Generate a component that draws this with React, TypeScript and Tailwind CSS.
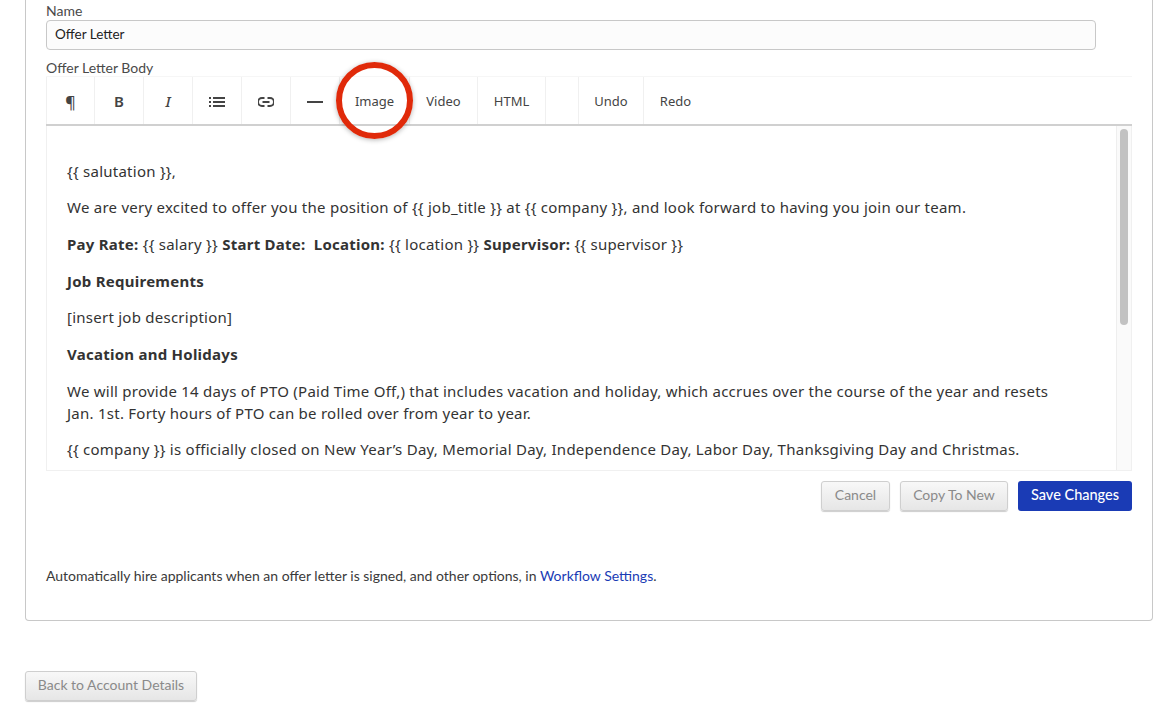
const UI_FONT = "font-['Lato','Open_Sans',sans-serif]";

function GrayButton({ label, className }: { label: string; className: string }) {
  return (
    <button
      className={`flex h-[30px] items-center justify-center rounded-[3px] border border-[#cfcfcf] bg-gradient-to-b from-[#f8f8f8] to-[#e6e6e6] pb-[3px] text-[14px] text-[#8a8a8a] shadow-[0_1px_1px_rgba(0,0,0,0.2)] ${className}`}
    >
      {label}
    </button>
  );
}

function ToolButton({ children, className }: { children: React.ReactNode; className: string }) {
  return (
    <div className={`flex h-full items-center justify-center border-r border-[#f0f0f0] pt-[2px] ${className}`}>
      {children}
    </div>
  );
}

export default function App() {
  return (
    <div className={`h-[721px] w-[1169px] overflow-hidden bg-white ${UI_FONT}`}>
      <div className="px-[16px] pl-[25px]">
        <div className="h-[621px] rounded-b-[4px] border-x border-b border-[#c8c8c8] pl-[20px] pr-[20px]">
          <label className="block pt-[3px] text-[14px] leading-[16px] text-[#4a4a4a]">Name</label>
          <input
            readOnly
            value="Offer Letter"
            className="mt-[1px] block h-[30px] w-[1050px] rounded-[4px] border border-[#c8c8c8] bg-[#fcfcfc] px-[8px] pb-[2px] text-[13.5px] text-[#222]"
          />
          <label className="mt-[10px] block text-[14px] leading-[16px] text-[#4a4a4a]">Offer Letter Body</label>

          <div className="relative mt-px w-[1086px]">
            {/* toolbar */}
            <div className="flex h-[49px] items-center border-b-2 border-[#d0d0d0] font-['Noto_Sans',sans-serif] text-[13px] text-[#444] shadow-[0_-1px_0_#f6f6f6]">
              <ToolButton className="w-[49px] border-l text-[16px] font-medium">¶</ToolButton>
              <ToolButton className="w-[49px] text-[15px] font-semibold">B</ToolButton>
              <ToolButton className="w-[49px] text-[15px] font-medium italic">I</ToolButton>
              <ToolButton className="w-[49px]">
                <svg width="16" height="12" viewBox="0 0 16 12" fill="#444">
                  <rect x="0" y="1" width="2" height="2" />
                  <rect x="0" y="5" width="2" height="2" />
                  <rect x="0" y="9" width="2" height="2" />
                  <rect x="4" y="1" width="12" height="2" />
                  <rect x="4" y="5" width="12" height="2" />
                  <rect x="4" y="9" width="12" height="2" />
                </svg>
              </ToolButton>
              <ToolButton className="w-[49px]">
                <svg width="16" height="10" viewBox="0 0 16 10" fill="none" stroke="#444" strokeWidth="2">
                  <path d="M6.5 1H4a4 4 0 0 0 0 8h2.5" />
                  <path d="M9.5 1H12a4 4 0 0 1 0 8H9.5" />
                  <path d="M4.5 5h7" />
                </svg>
              </ToolButton>
              <ToolButton className="w-[49px]">
                <span className="block h-[2px] w-[16px] bg-[#444]" />
              </ToolButton>
              <ToolButton className="w-[70px]">Image</ToolButton>
              <ToolButton className="w-[68px]">Video</ToolButton>
              <ToolButton className="w-[68px]">HTML</ToolButton>
              <ToolButton className="w-[33px]">{""}</ToolButton>
              <ToolButton className="w-[65px]">Undo</ToolButton>
              <div className="flex h-full w-[63px] items-center justify-center pt-[2px]">Redo</div>
            </div>

            {/* highlight ring around the Image button */}
            <div className="absolute left-[290px] top-[-15px] h-[77px] w-[77px] rounded-full border-[6px] border-[#e02a0a] shadow-[0_1px_5px_rgba(0,0,0,0.3)]" />

            {/* editor body */}
            <div className="flex h-[345px] overflow-hidden border-x border-b border-[#f0f0f0]">
              <div className="w-[1069px] shrink-0 pl-[20px] pr-[46px] pt-[33.5px] font-['Noto_Sans',sans-serif] text-[15px] leading-[22px] tracking-[0.25px] text-[#333]">
                <p className="mb-[14.7px]">{"{{ salutation }},"}</p>
                <p className="mb-[14.7px]">
                  {"We are very excited to offer you the position of {{ job_title }} at {{ company }}, and look forward to having you join our team."}
                </p>
                <p className="mb-[14.7px]">
                  <b>Pay Rate:</b> {"{{ salary }}"} <b>Start Date:&nbsp; Location:</b> {"{{ location }}"} <b>Supervisor:</b> {"{{ supervisor }}"}
                </p>
                <p className="mb-[14.7px] font-bold">Job Requirements</p>
                <p className="mb-[14.7px]">[insert job description]</p>
                <p className="mb-[14.7px] font-bold">Vacation and Holidays</p>
                <p className="mb-[14.7px]">
                  We will provide 14 days of PTO (Paid Time Off,) that includes vacation and holiday, which accrues over the course of the year and resets Jan. 1st. Forty hours of PTO can be rolled over from year to year.
                </p>
                <p>
                  {"{{ company }} is officially closed on New Year’s Day, Memorial Day, Independence Day, Labor Day, Thanksgiving Day and Christmas."}
                </p>
              </div>
              <div className="flex-1 border-x border-[#eeeeee] bg-[#fafafa] px-[3px] pt-[3px]">
                <div className="h-[196px] w-[8px] rounded-[4px] bg-[#c2c2c2]" />
              </div>
            </div>

            <div className="mt-[10px] flex justify-end gap-[10px]">
              <GrayButton label="Cancel" className="w-[69px]" />
              <GrayButton label="Copy To New" className="w-[108px]" />
              <button className="h-[30px] w-[114px] rounded-[3px] bg-[#1a3bb5] pb-[2px] text-[14.5px] font-medium text-white">
                Save Changes
              </button>
            </div>
          </div>

          <p className="mt-[57px] text-[14px] leading-[16px] text-[#3a3a3a]">
            Automatically hire applicants when an offer letter is signed, and other options, in{" "}
            <span className="text-[#1a3bb5]">Workflow Settings</span>.
          </p>
        </div>

        <GrayButton label="Back to Account Details" className="mt-[50px] w-[172px]" />
      </div>
    </div>
  );
}
